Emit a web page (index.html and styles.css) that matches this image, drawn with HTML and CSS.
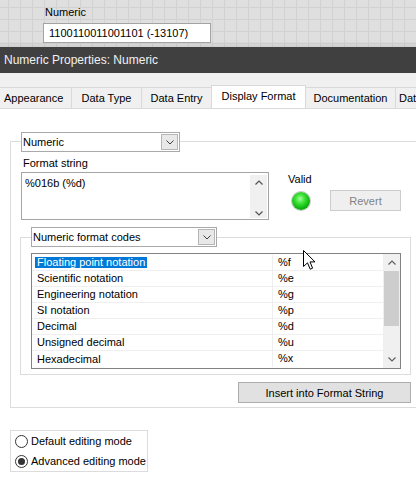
FILE: index.html
```html
<!DOCTYPE html>
<html>
<head>
<meta charset="utf-8">
<title>Numeric Properties</title>
<link rel="stylesheet" href="styles.css">
</head>
<body>
<div class="canvas">
  <div class="ctl-label">Numeric</div>
  <div class="ctl-box">1100110011001101 (-13107)</div>
</div>
<div class="titlebar">Numeric Properties: Numeric</div>
<div class="tabstrip">
  <div class="tab tab-appearance">Appearance</div>
  <div class="tab tab-type">Data Type</div>
  <div class="tab tab-entry">Data Entry</div>
  <div class="tab tab-format active">Display Format</div>
  <div class="tab tab-doc">Documentation</div>
  <div class="tab tab-binding">Data Binding</div>
</div>
<div class="page">
  <div class="group outer">
    <div class="combo combo-type">
      <span class="combo-text">Numeric</span>
      <span class="combo-btn"><svg width="8" height="5" viewBox="0 0 8 5"><polyline points="0.5,0.5 4,4 7.5,0.5" fill="none" stroke="#404040" stroke-width="1"/></svg></span>
    </div>
    <div class="format-row">
      <div class="format-col">
        <div class="label">Format string</div>
        <div class="textarea">
          <span class="textarea-text">%016b (%d)</span>
          <div class="vscroll">
            <svg width="8" height="5" viewBox="0 0 8 5"><polyline points="0.5,4.5 4,1 7.5,4.5" fill="none" stroke="#505050" stroke-width="1.2"/></svg>
            <svg width="8" height="5" viewBox="0 0 8 5"><polyline points="0.5,0.5 4,4 7.5,0.5" fill="none" stroke="#505050" stroke-width="1.2"/></svg>
          </div>
        </div>
      </div>
      <div class="valid-col">
        <div class="valid-label">Valid</div>
        <div class="led"></div>
      </div>
      <div class="btn revert">Revert</div>
    </div>
    <div class="group inner">
      <div class="combo combo-codes">
        <span class="combo-text">Numeric format codes</span>
        <span class="combo-btn"><svg width="8" height="5" viewBox="0 0 8 5"><polyline points="0.5,0.5 4,4 7.5,0.5" fill="none" stroke="#404040" stroke-width="1"/></svg></span>
      </div>
      <div class="listbox">
        <div class="rows">
          <div class="row"><span class="c1"><span class="sel">Floating point notation</span></span><span class="c2">%f</span></div>
          <div class="row"><span class="c1"><span class="item">Scientific notation</span></span><span class="c2">%e</span></div>
          <div class="row"><span class="c1"><span class="item">Engineering notation</span></span><span class="c2">%g</span></div>
          <div class="row"><span class="c1"><span class="item">SI notation</span></span><span class="c2">%p</span></div>
          <div class="row"><span class="c1"><span class="item">Decimal</span></span><span class="c2">%d</span></div>
          <div class="row"><span class="c1"><span class="item">Unsigned decimal</span></span><span class="c2">%u</span></div>
          <div class="row last"><span class="c1"><span class="item">Hexadecimal</span></span><span class="c2">%x</span></div>
        </div>
        <div class="lscroll">
          <div class="arrow"><svg width="8" height="5" viewBox="0 0 8 5"><polyline points="0.5,4.5 4,1 7.5,4.5" fill="none" stroke="#606060" stroke-width="1.2"/></svg></div>
          <div class="thumb"></div>
          <div class="arrow down"><svg width="8" height="5" viewBox="0 0 8 5"><polyline points="0.5,0.5 4,4 7.5,0.5" fill="none" stroke="#606060" stroke-width="1.2"/></svg></div>
        </div>
      </div>
    </div>
    <div class="btn-row"><div class="btn insert">Insert into Format String</div></div>
  </div>
  <div class="modes">
    <div class="mode"><span class="radio"></span><span>Default editing mode</span></div>
    <div class="mode"><span class="radio checked"></span><span>Advanced editing mode</span></div>
  </div>
</div>
<svg class="cursor" width="13" height="21" viewBox="0 0 13 21"><path d="M0.5,0.5 L0.5,16.5 L4.5,12.8 L7.2,19.2 L9.6,18.2 L7,11.9 L12,11.9 Z" fill="#fff" stroke="#000" stroke-width="1" stroke-linejoin="miter"/></svg>
</body>
</html>
```
FILE: styles.css
```css
* { box-sizing: border-box; margin: 0; padding: 0; }
html, body { width: 416px; height: 480px; overflow: hidden; }
body {
  font-family: "Liberation Sans", Arial, sans-serif;
  font-size: 11px;
  color: #000;
  background: #fff;
  position: relative;
}

/* front-panel canvas */
.canvas {
  height: 47px;
  padding: 5px 0 0 43px;
  background-color: #dfdfdf;
  background-image:
    linear-gradient(to bottom, rgba(0,0,0,0) 41px, rgba(0,0,0,0.07) 47px),
    linear-gradient(#d2d2d2 1px, transparent 1px),
    linear-gradient(90deg, #d2d2d2 1px, transparent 1px);
  background-size: 100% 100%, 12px 12px, 12px 12px;
  background-position: 0 0, 0 7px, 8px 0;
}
.ctl-label { line-height: 14px; padding-left: 2px; }
.ctl-box {
  margin-top: 4px;
  width: 168px;
  height: 20px;
  border: 1px solid #a3a3a3;
  background: #fff;
  padding-left: 5px;
  line-height: 18px;
}

.titlebar {
  height: 26px;
  line-height: 26px;
  background: #404040;
  color: #f2f2f2;
  font-size: 12px;
  padding-left: 4px;
}

/* tabs */
.tabstrip {
  height: 36px;
  background: #f0f0f0;
  border-bottom: 1px solid #d9d9d9;
  display: flex;
  align-items: flex-end;
  white-space: nowrap;
  overflow: hidden;
}
.tab {
  flex: none;
  height: 21px;
  line-height: 20px;
  border-top: 1px solid #d9d9d9;
  border-right: 1px solid #d9d9d9;
  text-align: center;
  background: #f0f0f0;
}
.tab-appearance { width: 72px; text-align: left; padding-left: 4px; }
.tab-type { width: 70px; }
.tab-entry { width: 70px; }
.tab-format { width: 95px; }
.tab-doc { width: 90px; }
.tab-binding { width: 70px; text-align: left; padding-left: 3px; }
.tab.active {
  height: 24px;
  margin-bottom: -1px;
  margin-left: -1px;
  border-left: 1px solid #d9d9d9;
  background: #fff;
  padding-bottom: 3px;
}

/* page */
.page { background: #fff; }
.group { border: 1px solid #dcdcdc; }
.outer {
  margin: 32px -20px 0 10px;
  padding: 0 0 4px 10px;
}
.combo {
  display: flex;
  align-items: center;
  height: 20px;
  border: 1px solid #a9a9a9;
  background: #fff;
  margin-top: -10px;
  padding-left: 1px;
}
.combo-type { width: 159px; }
.combo-codes { width: 186px; margin-top: -11px; }
.combo-btn {
  margin-left: auto;
  margin-right: 1px;
  width: 17px;
  height: 16px;
  border: 1px solid #b5b5b5;
  background: #e8e8e8;
  display: flex;
  align-items: center;
  justify-content: center;
}

.format-row { display: flex; align-items: flex-start; margin-top: 4px; }
.label { line-height: 15px; padding-left: 2px; margin-bottom: 1px; }
.textarea {
  width: 248px;
  height: 48px;
  border: 1px solid #a5a5a5;
  display: flex;
}
.textarea-text { padding: 3px 0 0 3px; line-height: 14px; }
.vscroll {
  margin: 2px 1px 1px auto;
  width: 17px;
  background: #f0f0f0;
  display: flex;
  flex-direction: column;
  justify-content: space-between;
  align-items: center;
  padding: 5px 0 2px;
}
.valid-col { margin-left: 19px; padding-top: 16px; width: 22px; }
.valid-label { line-height: 14px; }
.led {
  margin: 6px 0 0 4px;
  width: 18px;
  height: 18px;
  border-radius: 50%;
  background: radial-gradient(circle at 45% 38%, #a6ff9c 0%, #3fe33a 30%, #0bb40b 65%, #067d06 100%);
  box-shadow: 0 0 0 1px #c4c8c4;
}
.btn {
  display: flex;
  align-items: center;
  justify-content: center;
  height: 21px;
}
.revert {
  margin: 34px 0 0 20px;
  width: 71px;
  border: 1px solid #cccccc;
  background: #efefef;
  color: #838383;
}

.inner {
  margin: 17px 0 0 -1px;
  width: 391px;
  padding: 0 9px 5px 10px;
}
.listbox {
  margin-top: 6px;
  height: 116px;
  border: 1px solid #828282;
  display: flex;
}
.rows { flex: 1; padding-top: 1px; }
.row {
  display: flex;
  height: 16px;
  line-height: 15px;
  border-bottom: 1px solid #efefef;
}
.row.last { border-bottom: none; }
.c1 {
  width: 241px;
  padding-left: 3px;
  border-right: 1px solid #efefef;
  display: flex;
  align-items: center;
}
.c2 { flex: 1; padding-left: 5px; }
.item { padding: 0 2px; }
.sel {
  display: inline-block;
  padding: 0 2px;
  line-height: 11px;
  height: 11px;
  background: #0078d7;
  color: #fff;
}
.lscroll {
  width: 17px;
  background: #f0f0f0;
  display: flex;
  flex-direction: column;
}
.arrow {
  height: 17px;
  display: flex;
  align-items: center;
  justify-content: center;
}
.arrow.down { margin-top: auto; }
.thumb { height: 55px; margin: 0 1px; background: #cdcdcd; }

.btn-row {
  margin: 7px 0 0 -1px;
  width: 391px;
  display: flex;
  justify-content: flex-end;
}
.insert {
  width: 173px;
  border: 1px solid #adadad;
  background: #e1e1e1;
}

.modes {
  margin: 22px 0 0 10px;
  width: 138px;
  height: 42px;
  border: 1px solid #dcdcdc;
}
.mode {
  height: 20px;
  display: flex;
  align-items: center;
}
.radio {
  width: 13px;
  height: 13px;
  margin: 0 3px 0 4px;
  border: 1px solid #333;
  border-radius: 50%;
  background: #fff;
  position: relative;
}
.radio.checked::after {
  content: "";
  position: absolute;
  left: 2px;
  top: 2px;
  width: 7px;
  height: 7px;
  border-radius: 50%;
  background: #333;
}

.cursor { position: absolute; left: 303px; top: 250px; }
```
